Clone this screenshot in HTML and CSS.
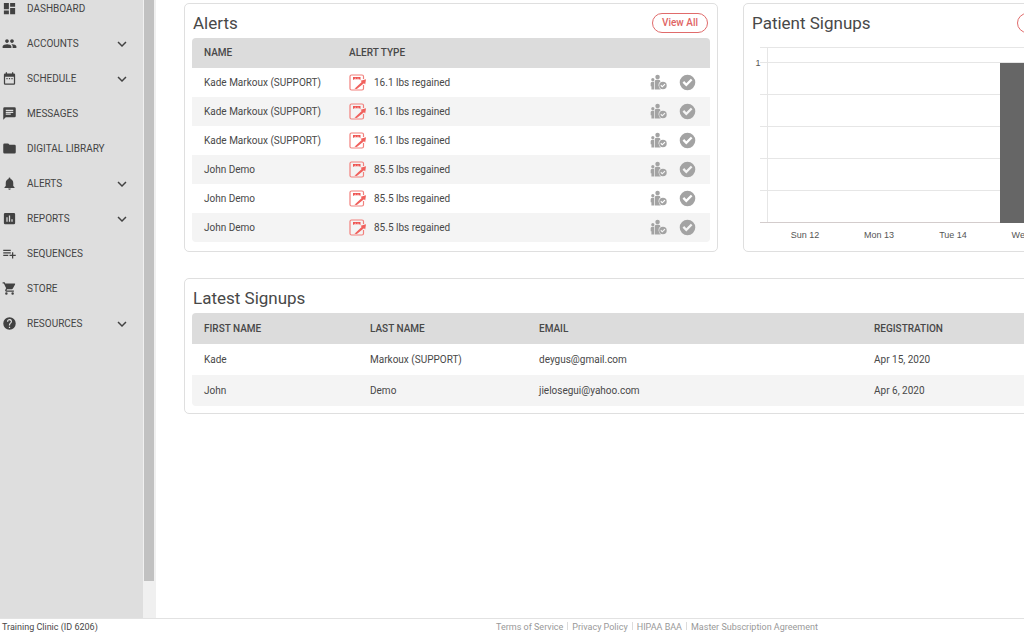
FILE: index.html
```html
<!DOCTYPE html>
<html lang="en">
<head>
<meta charset="utf-8">
<title>Dashboard</title>
<link rel="stylesheet" href="styles.css">
</head>
<body>
<svg class="sprite" aria-hidden="true">
  <symbol id="chevron" viewBox="0 0 24 24"><path d="M16.6 8.6 12 13.200 7.400 8.600 6 10l6 6 6-6z"/></symbol>
  <symbol id="form" viewBox="0 0 18 18">
    <path d="M14.500 5V2.500Q14.500 1 13 1H2.500Q1 1 1 2.500v12Q1 16 2.500 16H13Q14.500 16 14.500 14.500V11" fill="none" stroke="#f2807c" stroke-width="1.200"/>
    <path d="M4 3h7.500v3l-1.300-.7H5.300L4 6z" fill="#ee5552"/>
    <path d="M5.800 4.300h1M8.500 4.300h1" stroke="#fff" stroke-width=".6"/>
    <path d="M5.500 14.800 12.700 8 11.600 6.800 17 5.200l-.8 5.300-1.200-1.200-7.200 5.800z" fill="#f0615d"/>
  </symbol>
  <symbol id="family" viewBox="0 0 18 18">
    <circle cx="8" cy="3.200" r="2.400"/><circle cx="3" cy="6" r="1.700"/>
    <path d="M.7 9.800Q.7 8.200 2.300 8.200H4.300V16.500H1.500V13H.7z"/>
    <path d="M5 8q0-1.800 1.800-1.800h2.400q1.800 0 1.900 1.800Q8.800 9.400 9 12q.2 2.800 2.500 4.500H5z"/>
    <path fill-rule="evenodd" d="M13.700 8.200a4 4 0 1 0 0 8 4 4 0 0 0 0-8zm-.7 6.200-2-2 .9-.9 1.100 1.100 2.400-2.400.9.900z"/>
  </symbol>
  <symbol id="check" viewBox="0 0 24 24"><path fill-rule="evenodd" d="M12 1a11 11 0 1 0 0 22 11 11 0 0 0 0-22zm-1.700 16.600-5.300-5.300 2.300-2.300 3 3 6.400-6.400 2.300 2.300z"/></symbol>
</svg>
<div class="workspace">
  <nav class="sidebar" aria-label="Main">
    <ul class="menu">
      <li><a class="menu-link" href="#"><svg class="menu-icon" viewBox="0 0 24 24"><path d="M3 13h8V3H3zm0 8h8v-6H3zm10 0h8V11h-8zm0-18v6h8V3z"/></svg><span>DASHBOARD</span></a></li>
      <li><a class="menu-link" href="#"><svg class="menu-icon" viewBox="0 0 24 24"><path d="M16 11c1.660 0 2.990-1.340 2.990-3S17.660 5 16 5s-3 1.340-3 3 1.340 3 3 3zm-8 0c1.660 0 2.990-1.340 2.990-3S9.660 5 8 5 5 6.340 5 8s1.340 3 3 3zm0 2c-2.330 0-7 1.170-7 3.500V19h14v-2.500C15 14.170 10.330 13 8 13zm8 0c-.29 0-.62.02-.97.05 1.160.84 1.970 1.970 1.970 3.450V19h6v-2.500c0-2.330-4.670-3.500-7-3.500z"/></svg><span>ACCOUNTS</span><svg class="chevron"><use href="#chevron"/></svg></a></li>
      <li><a class="menu-link" href="#"><svg class="menu-icon" viewBox="0 0 24 24"><path d="M9 11H7v2h2zm4 0h-2v2h2zm4 0h-2v2h2zm2-7h-1V2h-2v2H8V2H6v2H5a2 2 0 0 0-2 2v14a2 2 0 0 0 2 2h14a2 2 0 0 0 2-2V6a2 2 0 0 0-2-2zm0 16H5V9h14z"/></svg><span>SCHEDULE</span><svg class="chevron"><use href="#chevron"/></svg></a></li>
      <li><a class="menu-link" href="#"><svg class="menu-icon" viewBox="0 0 24 24"><path d="M20 2H4a2 2 0 0 0-2 2v18l4-4h14a2 2 0 0 0 2-2V4a2 2 0 0 0-2-2zM6 9h12v2H6zm8 5H6v-2h8zm4-6H6V6h12z"/></svg><span>MESSAGES</span></a></li>
      <li><a class="menu-link" href="#"><svg class="menu-icon" viewBox="0 0 24 24"><path d="M10 4H4a2 2 0 0 0-2 2v12a2 2 0 0 0 2 2h16a2 2 0 0 0 2-2V8a2 2 0 0 0-2-2h-8z"/></svg><span>DIGITAL LIBRARY</span></a></li>
      <li><a class="menu-link" href="#"><svg class="menu-icon" viewBox="0 0 24 24"><path d="M12 22a2 2 0 0 0 2-2h-4a2 2 0 0 0 2 2zm6-6v-5c0-3.070-1.640-5.640-4.500-6.320V4a1.500 1.500 0 0 0-3 0v.68C7.630 5.360 6 7.920 6 11v5l-2 2v1h16v-1z"/></svg><span>ALERTS</span><svg class="chevron"><use href="#chevron"/></svg></a></li>
      <li><a class="menu-link" href="#"><svg class="menu-icon" viewBox="0 0 24 24"><path d="M19 3H5a2 2 0 0 0-2 2v14a2 2 0 0 0 2 2h14a2 2 0 0 0 2-2V5a2 2 0 0 0-2-2zM9 17H7v-7h2zm4 0h-2V7h2zm4 0h-2v-4h2z"/></svg><span>REPORTS</span><svg class="chevron"><use href="#chevron"/></svg></a></li>
      <li><a class="menu-link" href="#"><svg class="menu-icon" viewBox="0 0 24 24"><path d="M14 10H2v2h12zm0-4H2v2h12zm4 8v-4h-2v4h-4v2h4v4h2v-4h4v-2zM2 16h8v-2H2z"/></svg><span>SEQUENCES</span></a></li>
      <li><a class="menu-link" href="#"><svg class="menu-icon" viewBox="0 0 24 24"><path d="M7 18a2 2 0 1 0 0 4 2 2 0 0 0 0-4zM1 2v2h2l3.600 7.590-1.350 2.450C4.520 15.370 5.480 17 7 17h12v-2H7.420l-.22-.37.900-1.630h7.450c.75 0 1.410-.41 1.750-1.030l3.580-6.490A1 1 0 0 0 20 4H5.210l-.94-2zm16 16a2 2 0 1 0 0 4 2 2 0 0 0 0-4z"/></svg><span>STORE</span></a></li>
      <li><a class="menu-link" href="#"><svg class="menu-icon" viewBox="0 0 24 24"><path d="M12 2a10 10 0 1 0 0 20 10 10 0 0 0 0-20zm1 17h-2v-2h2zm2.070-7.750-.9.920C13.450 12.900 13 13.500 13 15h-2v-.5c0-1.100.45-2.100 1.170-2.830l1.240-1.260A2 2 0 1 0 10 9H8a4 4 0 1 1 7.070 2.250z"/></svg><span>RESOURCES</span><svg class="chevron"><use href="#chevron"/></svg></a></li>
    </ul>
  </nav>
  <div class="track"><div class="thumb"></div></div>
  <main class="main">
    <div class="board">
      <section class="card">
        <header class="card-head"><h2 class="card-title">Alerts</h2><button class="view-all" type="button">View All</button></header>
        <table class="grid alerts">
          <colgroup><col class="col-name"><col><col class="col-actions"></colgroup>
          <thead><tr><th>NAME</th><th>ALERT TYPE</th><th aria-label="Actions"></th></tr></thead>
          <tbody>
            <tr><td>Kade Markoux (SUPPORT)</td><td><div class="kind"><svg class="icon"><use href="#form"/></svg>16.1 lbs regained</div></td><td><div class="actions"><button type="button" aria-label="Assign"><svg class="icon"><use href="#family"/></svg></button><button type="button" aria-label="Resolve"><svg class="icon"><use href="#check"/></svg></button></div></td></tr>
            <tr><td>Kade Markoux (SUPPORT)</td><td><div class="kind"><svg class="icon"><use href="#form"/></svg>16.1 lbs regained</div></td><td><div class="actions"><button type="button" aria-label="Assign"><svg class="icon"><use href="#family"/></svg></button><button type="button" aria-label="Resolve"><svg class="icon"><use href="#check"/></svg></button></div></td></tr>
            <tr><td>Kade Markoux (SUPPORT)</td><td><div class="kind"><svg class="icon"><use href="#form"/></svg>16.1 lbs regained</div></td><td><div class="actions"><button type="button" aria-label="Assign"><svg class="icon"><use href="#family"/></svg></button><button type="button" aria-label="Resolve"><svg class="icon"><use href="#check"/></svg></button></div></td></tr>
            <tr><td>John Demo</td><td><div class="kind"><svg class="icon"><use href="#form"/></svg>85.5 lbs regained</div></td><td><div class="actions"><button type="button" aria-label="Assign"><svg class="icon"><use href="#family"/></svg></button><button type="button" aria-label="Resolve"><svg class="icon"><use href="#check"/></svg></button></div></td></tr>
            <tr><td>John Demo</td><td><div class="kind"><svg class="icon"><use href="#form"/></svg>85.5 lbs regained</div></td><td><div class="actions"><button type="button" aria-label="Assign"><svg class="icon"><use href="#family"/></svg></button><button type="button" aria-label="Resolve"><svg class="icon"><use href="#check"/></svg></button></div></td></tr>
            <tr><td>John Demo</td><td><div class="kind"><svg class="icon"><use href="#form"/></svg>85.5 lbs regained</div></td><td><div class="actions"><button type="button" aria-label="Assign"><svg class="icon"><use href="#family"/></svg></button><button type="button" aria-label="Resolve"><svg class="icon"><use href="#check"/></svg></button></div></td></tr>
          </tbody>
        </table>
      </section>
      <section class="card">
        <header class="card-head"><h2 class="card-title">Patient Signups</h2><button class="view-all" type="button" aria-label="View all signups"></button></header>
        <svg class="chart" viewBox="0 0 324 204" role="img" aria-label="Patient signups by day">
          <path class="gridline" d="M9 9.500H324M9 24.500H324M9 56.500H324M9 88.500H324M9 120.500H324M9 152.500H324M16.500 9V184"/>
          <path class="axis" d="M9 184.500H324"/>
          <rect class="bar" x="249" y="25" width="60" height="160"/>
          <text class="tick" x="7" y="28" text-anchor="middle">1</text>
          <text class="tick" x="54" y="200" text-anchor="middle">Sun 12</text>
          <text class="tick" x="128" y="200" text-anchor="middle">Mon 13</text>
          <text class="tick" x="202" y="200" text-anchor="middle">Tue 14</text>
          <text class="tick" x="276" y="200" text-anchor="middle">Wed 15</text>
        </svg>
      </section>
      <section class="card wide">
        <header class="card-head"><h2 class="card-title">Latest Signups</h2></header>
        <table class="grid signups">
          <colgroup><col class="col-first"><col class="col-last"><col class="col-email"><col></colgroup>
          <thead><tr><th>FIRST NAME</th><th>LAST NAME</th><th>EMAIL</th><th>REGISTRATION</th></tr></thead>
          <tbody>
            <tr><td>Kade</td><td>Markoux (SUPPORT)</td><td>deygus@gmail.com</td><td>Apr 15, 2020</td></tr>
            <tr><td>John</td><td>Demo</td><td>jielosegui@yahoo.com</td><td>Apr 6, 2020</td></tr>
          </tbody>
        </table>
      </section>
    </div>
  </main>
</div>
<footer class="footer">
  <span class="clinic">Training Clinic (ID 6206)</span>
  <div class="legal"><a href="#">Terms of Service</a><a href="#">Privacy Policy</a><a href="#">HIPAA BAA</a><a href="#">Master Subscription Agreement</a></div>
</footer>
</body>
</html>
```
FILE: styles.css
```css
* { box-sizing: border-box; }
body {
  margin: 0;
  height: 100vh;
  display: flex;
  flex-direction: column;
  overflow: hidden;
  background: #fff;
  color: #484848;
  font: 10px/16px Roboto, sans-serif;
}
a { color: inherit; text-decoration: none; }
.sprite { display: none; }
.workspace { flex: 1; min-height: 0; display: flex; }

.sidebar { width: 143px; flex: none; background: #dedede; }
.menu { list-style: none; margin: 0; padding: 0 12px 0 2px; display: grid; gap: 18px; }
.menu-link { display: flex; align-items: center; height: 17px; color: #444; }
.menu-icon { width: 15px; height: 15px; margin-right: 10px; fill: #424242; }
.chevron { width: 18px; height: 18px; margin-left: auto; fill: #424242; }
.track { width: 13px; flex: none; padding: 0 2px 0 1px; background: #f0f0f0; }
.thumb { height: 94%; background: #c1c1c1; }

.main { flex: 1; min-width: 0; overflow: hidden; padding: 3px 0 0 28px; }
.board { min-width: 899px; display: grid; grid-template-columns: 534fr 340fr; gap: 26px 25px; }
.card { border: 1px solid #dfdfdf; border-radius: 5px; padding: 7px 7px 9px; }
.wide { grid-column: 1 / -1; padding-bottom: 7px; }
.card-head { display: flex; align-items: center; justify-content: space-between; height: 27px; padding: 0 2px 4px 1px; }
.card-title { margin: 0; font-size: 17px; line-height: 22px; font-weight: 400; color: #484848; }
.view-all {
  width: 56px;
  height: 20px;
  padding: 0;
  border: 1px solid #e06b6b;
  border-radius: 10px;
  background: #fff;
  color: #df6464;
  font: 500 10px/16px Roboto, sans-serif;
}

.grid { width: 100%; border-collapse: separate; border-spacing: 0; table-layout: fixed; white-space: nowrap; }
.grid th { height: 30px; padding: 0 12px; text-align: left; font-weight: 500; background: #dcdcdc; color: #484848; }
.grid td { height: 29px; padding: 0 12px; }
.grid tr:nth-child(even) td { background: #f4f4f4; }
.grid th:first-child { border-top-left-radius: 4px; }
.grid th:last-child { border-top-right-radius: 4px; }
.grid tr:last-child td:first-child { border-bottom-left-radius: 4px; }
.grid tr:last-child td:last-child { border-bottom-right-radius: 4px; }
.grid.signups th, .grid.signups td { height: 31px; }
.col-name { width: 145px; }
.col-actions { width: 75px; }
.col-first { width: 166px; }
.col-last { width: 169px; }
.col-email { width: 335px; }
.kind { display: flex; align-items: center; gap: 7px; }
.icon { display: block; width: 18px; height: 18px; }
.actions { display: flex; justify-content: flex-end; gap: 12px; padding-right: 2px; }
.actions button { padding: 0; border: 0; background: none; }
.actions .icon { fill: #a3a3a3; width: 17px; height: 17px; }

.chart { display: block; width: 100%; }
.gridline { fill: none; stroke: #e6e6e6; }
.axis { stroke: #d3cccc; }
.bar { fill: #666; }
.tick { font: 9px "Liberation Sans", Arial, sans-serif; fill: #555; }

.footer {
  flex: none;
  display: flex;
  height: 16px;
  border-top: 1px solid #e2e2e2;
  padding-left: 2px;
  font-size: 9px;
  line-height: 16px;
}
.clinic { width: 494px; }
.legal { display: flex; align-items: center; color: #999; }
.legal a { line-height: 16px; }
.legal a + a::before { content: ""; display: inline-block; height: 8px; margin: 0 4px; border-left: 1px solid #dcdcdc; }
```
